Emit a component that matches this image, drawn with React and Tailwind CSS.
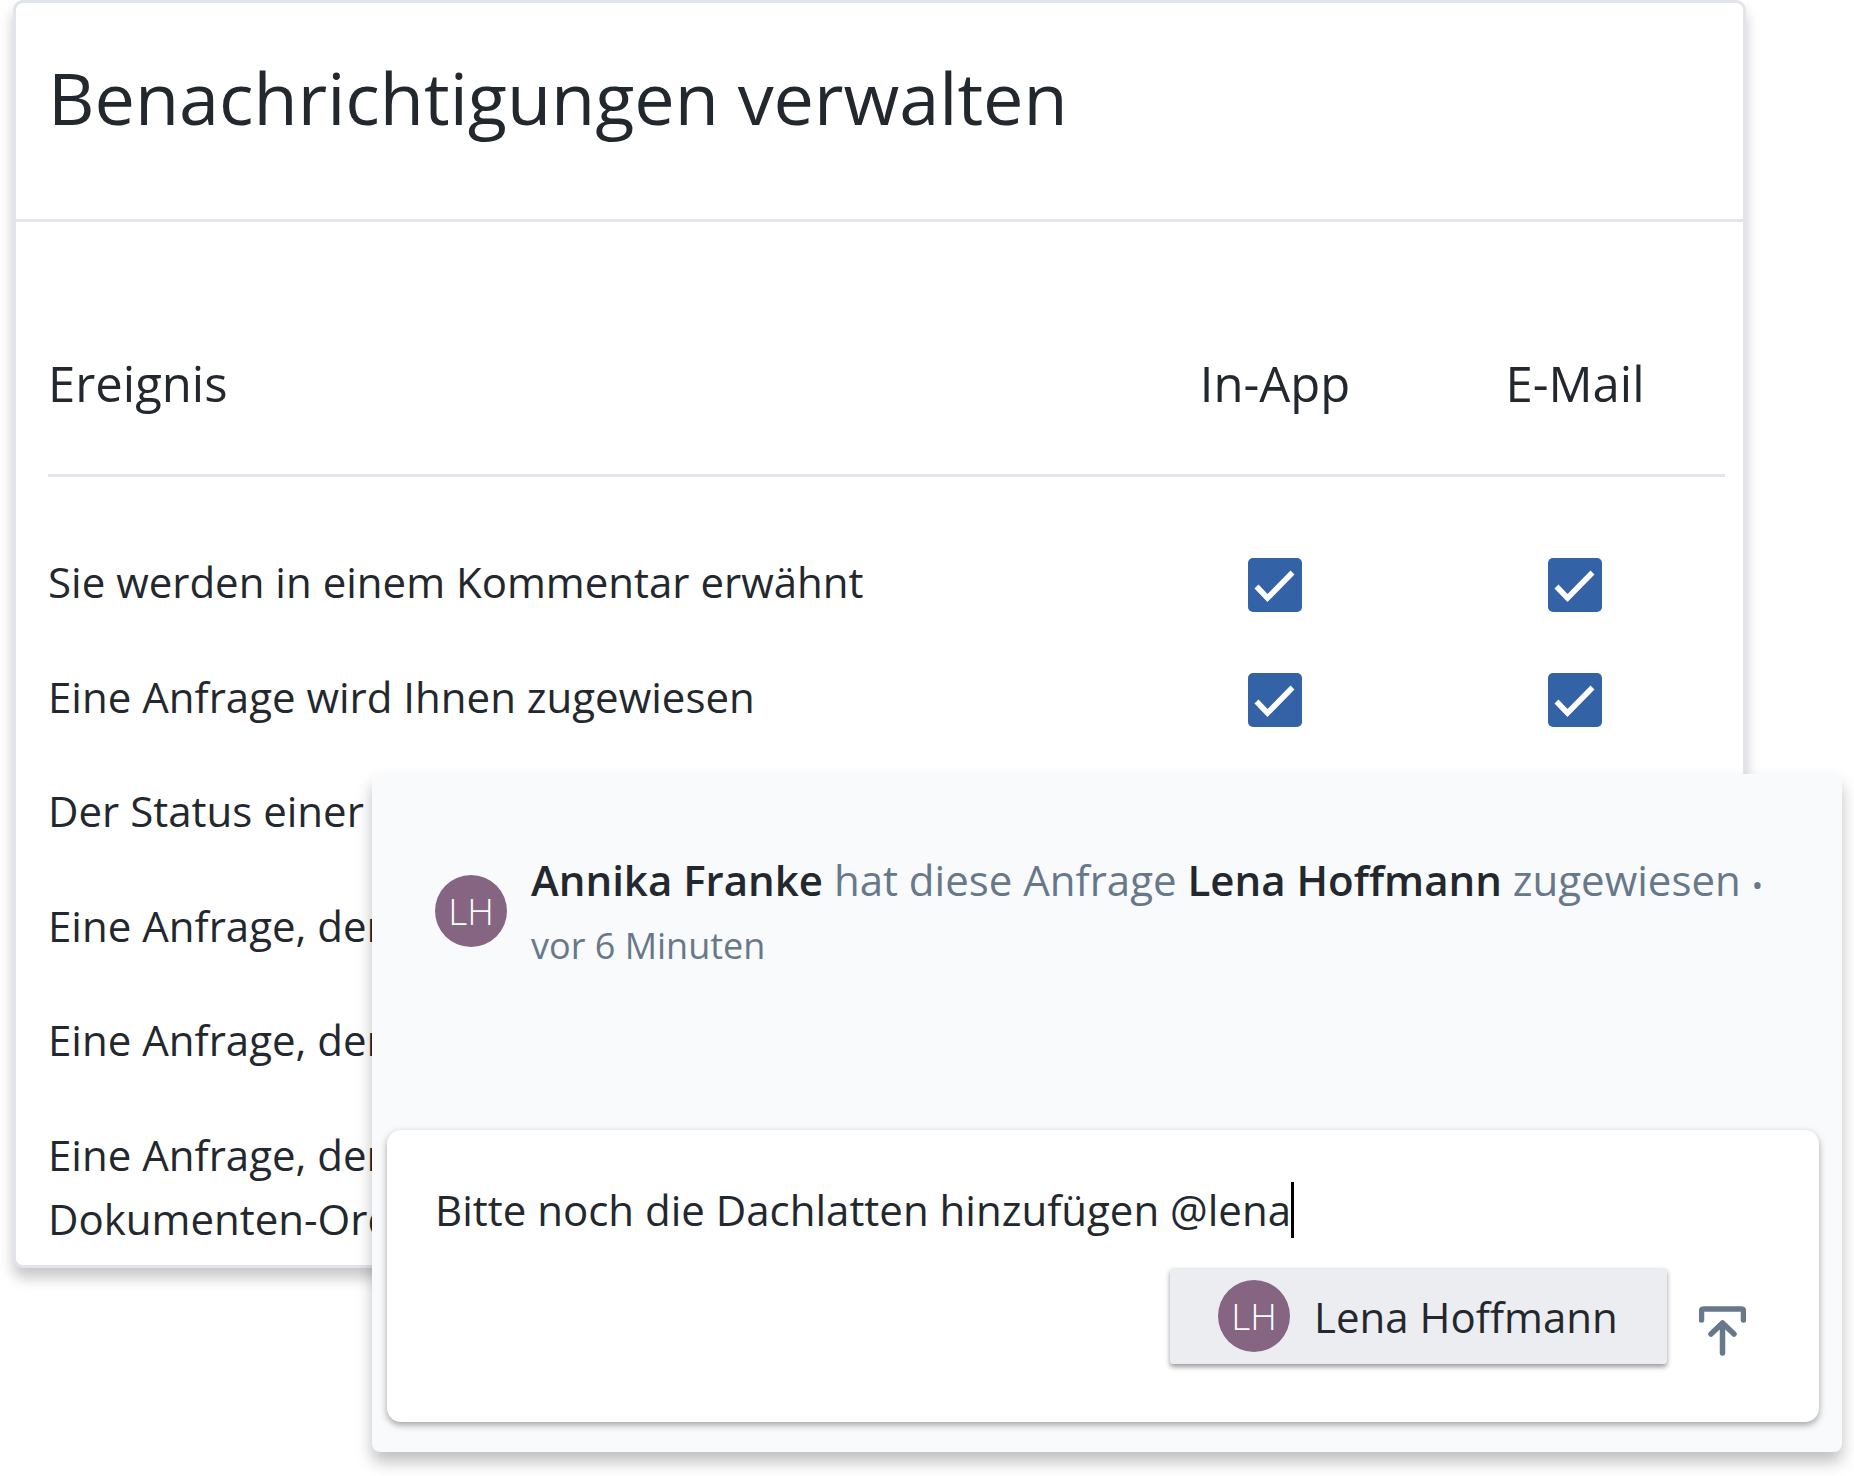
const font = { fontFamily: '"Open Sans", sans-serif' };

// only the part of each label that shows left of the panel
const rows = [
  ['Sie werden in einem Kommentar erwähnt'],
  ['Eine Anfrage wird Ihnen zugewiesen'],
  ['Der Status einer'],
  ['Eine Anfrage, der'],
  ['Eine Anfrage, der'],
  ['Eine Anfrage, der', 'Dokumenten-Ord'],
];

function Check() {
  return (
    <div className="w-[54px] h-[54px] rounded-[5px] bg-[#3363a6]">
      <svg width="54" height="54" viewBox="0 0 54 54" fill="none">
        <path d="M8.5 28.5 L19.5 40 L44.5 14.5" stroke="#fff" strokeWidth="5.5" />
      </svg>
    </div>
  );
}

function Avatar() {
  return (
    <div className="w-[72px] h-[72px] shrink-0 rounded-full bg-[#856582] flex items-center justify-center text-[37px] font-light text-white">
      LH
    </div>
  );
}

export default function App() {
  return (
    <div className="relative w-[1854px] h-[1476px] bg-white overflow-hidden" style={font}>
      {/* settings card */}
      <div className="ml-[13px] w-[1733px] h-[1268px] bg-white rounded-[10px] border-[3px] border-[#e1e4ea] shadow-[0_10px_14px_rgba(0,0,0,0.22)] overflow-hidden">
        <div className="h-[219px] border-b-[3px] border-[#e1e4ea] pl-[32px] pt-[45px]">
          <h1 className="text-[72px] leading-[98px] text-[#23282e]">Benachrichtigungen verwalten</h1>
        </div>
        <div className="ml-[32px] w-[1677px]">
          <div className="flex items-center h-[255px] pt-[71px] border-b-[3px] border-[#e1e4ea] text-[49px] text-[#23282e]">
            <div className="flex-1">Ereignis</div>
            <div className="w-[300px] text-center">In-App</div>
            <div className="w-[300px] text-center">E-Mail</div>
          </div>
          <div className="pt-[73px] text-[42px] leading-[64px] text-[#23282e]">
            {rows.map((r, i) => (
              <div key={i} className="flex mb-[50.5px]">
                <div className="flex-1 whitespace-nowrap">
                  {r.map((line) => (
                    <div key={line}>{line}</div>
                  ))}
                </div>
                {i < 2 && (
                  <>
                    <div className="w-[300px] flex justify-center pt-[8px]"><Check /></div>
                    <div className="w-[300px] flex justify-center pt-[8px]"><Check /></div>
                  </>
                )}
              </div>
            ))}
          </div>
        </div>
      </div>

      {/* activity panel on top */}
      <div className="absolute left-[372px] top-[774px] w-[1470px] h-[678px] rounded-[8px] bg-[#f9fafc] shadow-[0_10px_16px_rgba(0,0,0,0.25)] pl-[15px] pr-[23px] pb-[30px] flex flex-col justify-between">
        <div className="flex items-center gap-[24px] pl-[48px] pt-[74px]">
          <Avatar />
          <div className="whitespace-nowrap">
            <div className="text-[42px] leading-[64px] text-[#66788a]">
              <span className="font-semibold text-[#23282e]">Annika Franke</span> hat diese Anfrage{' '}
              <span className="font-semibold text-[#23282e]">Lena Hoffmann</span> zugewiesen <span className="text-[30px]">•</span>
            </div>
            <div className="text-[36px] leading-[57px] text-[#66788a]">vor 6 Minuten</div>
          </div>
        </div>
        <div className="h-[292px] bg-white rounded-[14px] shadow-[0_3px_7px_rgba(0,0,0,0.35)] pl-[48px] pr-[74px] pt-[48px]">
          <div className="flex items-center text-[42px] leading-[64px] text-[#23282e] whitespace-nowrap">
            Bitte noch die Dachlatten hinzufügen @lena
            <span className="w-[3px] h-[56px] bg-black" />
          </div>
          <div className="flex justify-end items-start gap-[32px] mt-[26px] -mr-[1px]">
            <div className="w-[497px] h-[96px] bg-[#ecedf1] rounded-[3px] shadow-[0_3px_5px_rgba(0,0,0,0.4)] flex items-center gap-[24px] pl-[48px] text-[42px] text-[#23282e]">
              <Avatar />
              Lena Hoffmann
            </div>
            <svg className="mt-[38px]" width="47" height="50" viewBox="0 0 47 50" fill="none" stroke="#66788a" strokeLinecap="round" strokeLinejoin="round" strokeWidth="5.5">
              <path d="M2.5 14 V5 Q2.5 3 5 3 H42 Q44.5 3 44.5 5 V14" />
              <path d="M23.5 47 V17 M12 28 L23.5 17 L35 28" />
            </svg>
          </div>
        </div>
      </div>
    </div>
  );
}
